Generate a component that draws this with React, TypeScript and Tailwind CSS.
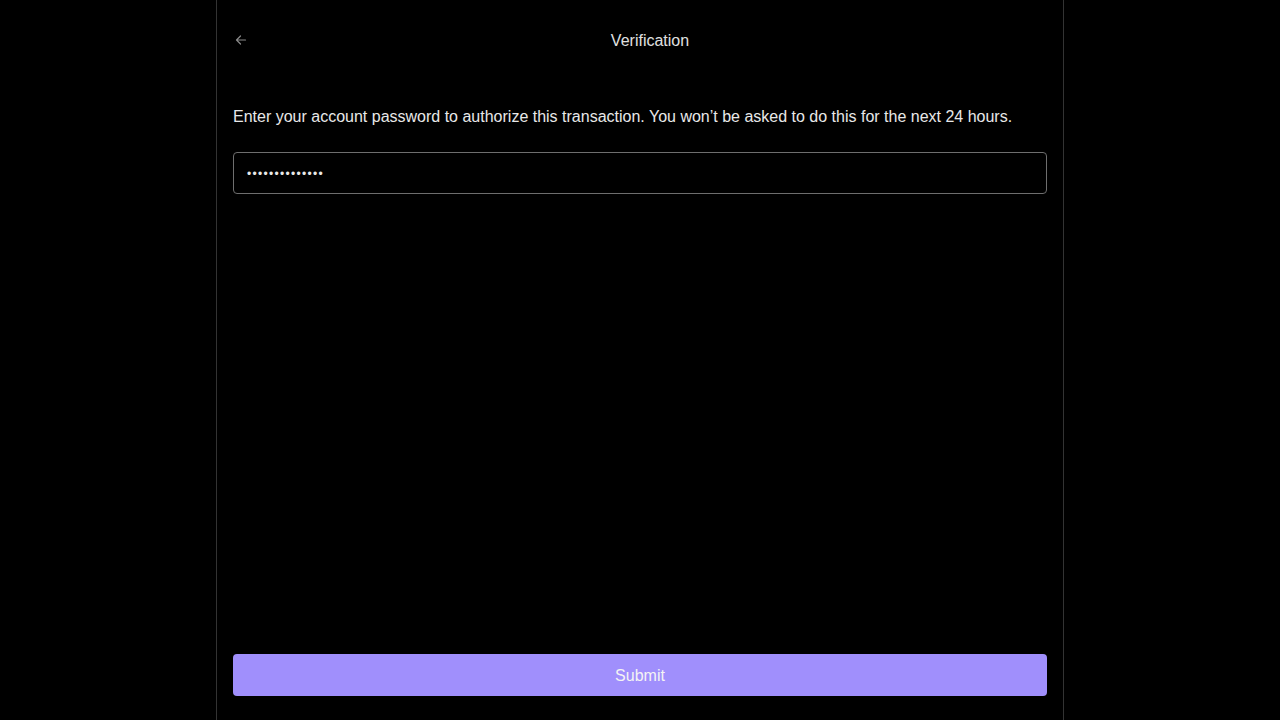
import React from "react";

export default function App() {
  return (
    <div className="min-h-[720px] h-[720px] w-full bg-black flex justify-center" style={{ fontFamily: '"Liberation Sans", Arial, sans-serif' }}>
      <div className="w-[848px] h-full border-x border-[#333333] flex flex-col px-4 pb-6">
        <div className="h-20 flex items-center">
          <div className="w-5 flex items-center">
            <svg className="ml-[2px]" width="12" height="12" viewBox="0 0 12 12" fill="none" stroke="#8a8a8a" strokeWidth="1.2" strokeLinecap="round" strokeLinejoin="round">
              <path d="M10.5 6H1.5M5.5 2L1.5 6L5.5 10" />
            </svg>
          </div>
          <div className="flex-1 text-center text-[16px] leading-[20px] text-[#e0e0e0] pt-[1px]">Verification</div>
        </div>
        <p className="mt-[27px] text-[16px] leading-[20px] text-[#e8e8e8]">
          Enter your account password to authorize this transaction. You won’t be asked to do this for the next 24 hours.
        </p>
        <div className="mt-[25px] h-[42px] rounded border border-[#6e6e6e] flex items-center px-[13px] pt-[2px] text-[#e8e8e8] text-[12px] tracking-[1.3px]">
          ••••••••••••••
        </div>
        <div className="flex-1" />
        <button className="h-[42px] rounded bg-[#a08ffc] text-[#f4f4f4] text-[16px] pt-[2px]">Submit</button>
      </div>
    </div>
  );
}
